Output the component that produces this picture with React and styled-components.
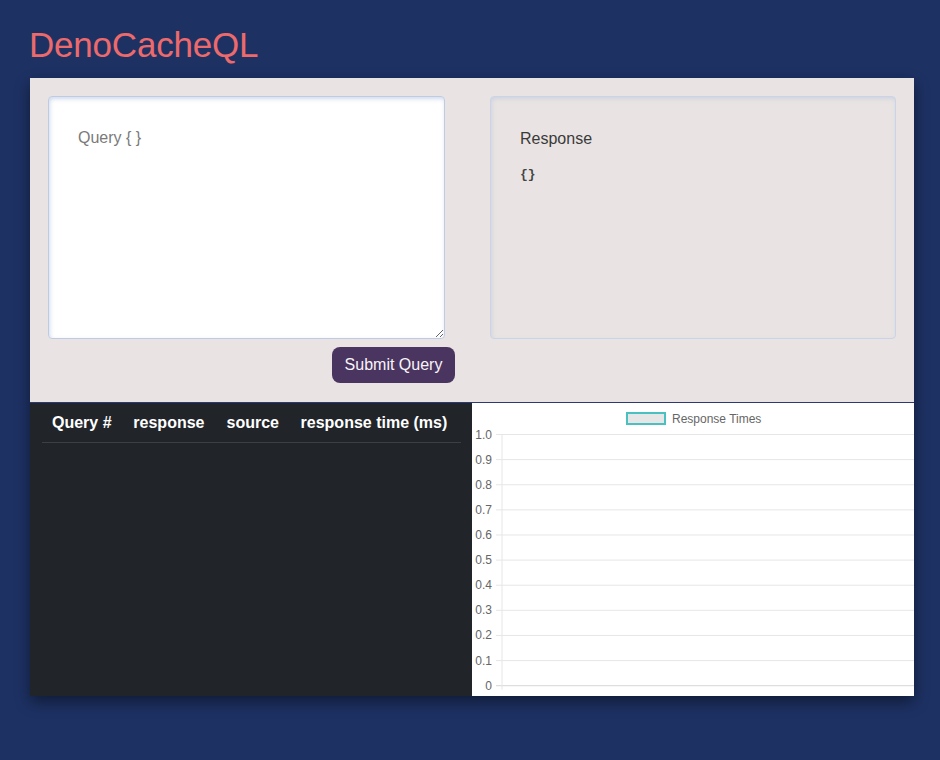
import React from "react";
import styled, { createGlobalStyle } from "styled-components";

const Global = createGlobalStyle`
  html, body { margin: 0; padding: 0; }
  body {
    background: #1d3163;
    font-family: "Liberation Sans", Arial, Helvetica, sans-serif;
    min-height: 760px;
  }
`;

const Page = styled.div`
  padding: 24px 26px 60px 30px;
`;

const Title = styled.h1`
  margin: 0 0 13px -1px;
  font-size: 35px;
  font-weight: 400;
  line-height: 41px;
  color: #ec6a6b;
  letter-spacing: -0.2px;
`;

const Card = styled.div`
  width: 884px;
  box-shadow: 0 6px 14px rgba(0, 0, 0, 0.45);
`;

const TopPanel = styled.div`
  background: #e9e4e3;
  padding: 18px 18px 19px 18px;
  display: grid;
  grid-template-columns: 407px 406px;
  column-gap: 35px;
`;

const Column = styled.div`
  display: flex;
  flex-direction: column;
  align-items: ${(p) => (p.$end ? "flex-end" : "stretch")};
`;

const QueryInput = styled.textarea`
  box-sizing: border-box;
  width: 397px;
  height: 243px;
  align-self: flex-start;
  margin: 0;
  padding: 30px 29px;
  border: 1px solid #bfcbe3;
  border-radius: 4px;
  background: #fff;
  box-shadow: inset 1px 2px 4px rgba(120, 150, 200, 0.35);
  font-family: "Liberation Sans", Arial, sans-serif;
  font-size: 16px;
  line-height: 22px;
  color: #333;
  outline: none;
  &::placeholder { color: #7a7a7a; }
`;

const SubmitButton = styled.button`
  margin-top: 8px;
  width: 123px;
  height: 36px;
  border: none;
  border-radius: 8px;
  background: #4a3560;
  color: #f7f4f9;
  font-family: "Liberation Sans", Arial, sans-serif;
  font-size: 16px;
  cursor: pointer;
`;

const ResponseBox = styled.div`
  box-sizing: border-box;
  height: 243px;
  padding: 32px 29px;
  border: 1px solid #c9d4ea;
  border-radius: 4px;
  background: #e9e4e3;
  box-shadow: inset 1px 2px 4px rgba(160, 180, 215, 0.35);
`;

const ResponseLabel = styled.div`
  font-size: 16px;
  line-height: 20px;
  color: #3a3a3a;
`;

const ResponseBody = styled.pre`
  margin: 18px 0 0;
  font-family: "Liberation Mono", "DejaVu Sans Mono", monospace;
  font-size: 13px;
  font-weight: 700;
  color: #444;
`;

const BottomRow = styled.div`
  box-sizing: border-box;
  display: grid;
  grid-template-columns: 442px 442px;
  height: 294px;
  border-top: 1px solid #2c3973;
  overflow: hidden;
`;

const DarkPane = styled.div`
  background: #212529;
  padding: 0 11px 0 12px;
`;

const Table = styled.table`
  width: 100%;
  border-collapse: collapse;
  color: #fff;
`;

const Th = styled.th`
  padding: 11px 10px 10px;
  font-size: 16px;
  font-weight: 700;
  text-align: left;
  white-space: nowrap;
  border-bottom: 1px solid #3b4047;
`;

const ChartPane = styled.div`
  background: #fff;
`;

const ChartSvg = styled.svg`
  display: block;
`;

const ticks = [1.0, 0.9, 0.8, 0.7, 0.6, 0.5, 0.4, 0.3, 0.2, 0.1, 0];

function Chart() {
  const top = 31.5;
  const bottom = 282.7;
  const step = (bottom - top) / 10;
  return (
    <ChartSvg width="442" height="293" viewBox="0 0 442 293">
      <rect x="155" y="10" width="38" height="11" fill="#e6e6e6" stroke="#4bc0c0" strokeWidth="2" />
      <text x="200" y="20" fontSize="12" fill="#666" fontFamily="Liberation Sans, Arial, sans-serif">
        Response Times
      </text>
      {ticks.map((t, i) => {
        const y = top + i * step;
        return (
          <g key={i}>
            <line x1="24" x2="442" y1={y} y2={y} stroke={i === 10 ? "#d6d6d6" : "#e6e6e6"} strokeWidth="1" />
            <text
              x="20"
              y={y + 4}
              fontSize="12"
              fill="#666"
              textAnchor="end"
              fontFamily="Liberation Sans, Arial, sans-serif"
            >
              {t === 0 ? "0" : t.toFixed(1)}
            </text>
          </g>
        );
      })}
      <line x1="30" x2="30" y1={top} y2={bottom + 4} stroke="#e6e6e6" strokeWidth="1" />
    </ChartSvg>
  );
}

export default function App() {
  return (
    <Page>
      <Global />
      <Title>DenoCacheQL</Title>
      <Card>
        <TopPanel>
          <Column $end>
            <QueryInput placeholder="Query { }" />
            <SubmitButton>Submit Query</SubmitButton>
          </Column>
          <Column>
            <ResponseBox>
              <ResponseLabel>Response</ResponseLabel>
              <ResponseBody>{"{}"}</ResponseBody>
            </ResponseBox>
          </Column>
        </TopPanel>
        <BottomRow>
          <DarkPane>
            <Table>
              <thead>
                <tr>
                  <Th>Query #</Th>
                  <Th>response</Th>
                  <Th>source</Th>
                  <Th>response time (ms)</Th>
                </tr>
              </thead>
            </Table>
          </DarkPane>
          <ChartPane>
            <Chart />
          </ChartPane>
        </BottomRow>
      </Card>
    </Page>
  );
}
